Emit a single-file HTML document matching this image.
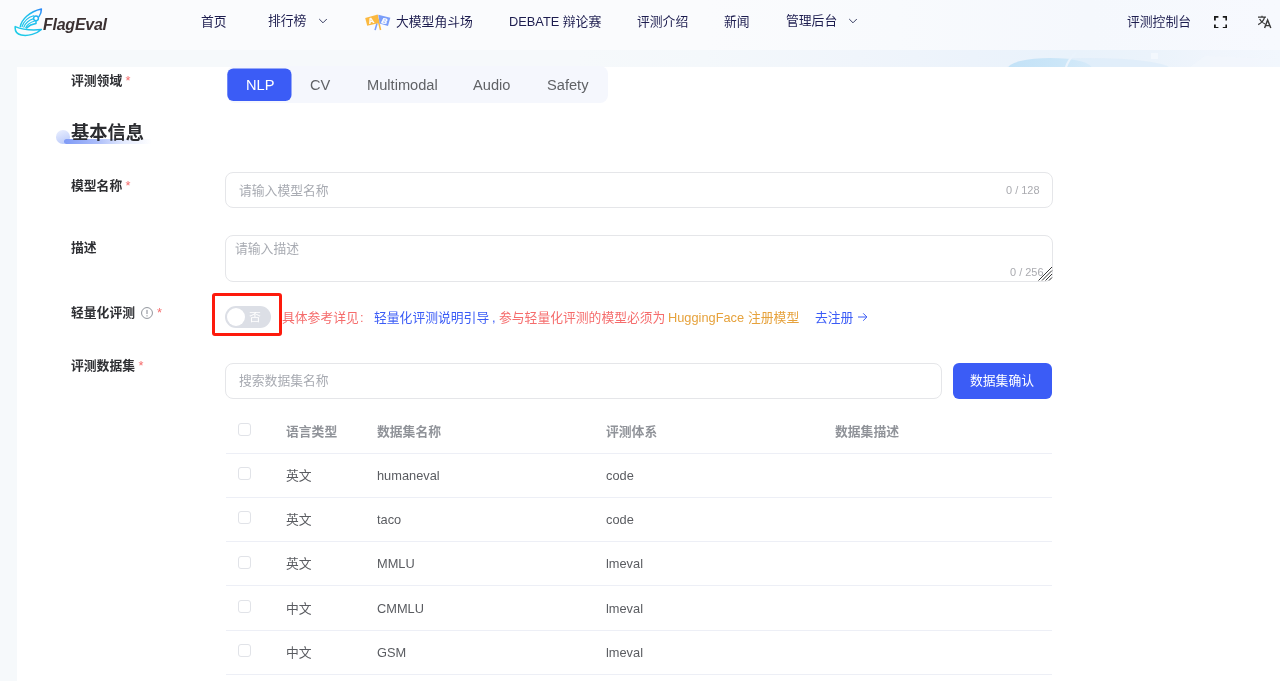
<!DOCTYPE html>
<html lang="zh-CN">
<head>
<meta charset="utf-8">
<title>FlagEval</title>
<style>
*{box-sizing:border-box;margin:0;padding:0}
html,body{width:1280px;height:681px;overflow:hidden}
body{font-family:"Liberation Sans","Noto Sans CJK SC",sans-serif;font-size:12.8px;color:#1d2129;background:#f6f9fb;position:relative}
.abs{position:absolute;white-space:nowrap}
.nav,.label,.segitem,.ph,.cnt,.th,.td,.msg,.t{will-change:transform}
#bgband{left:0;top:50px;width:1280px;height:17px;background:linear-gradient(90deg,#f6f9fb 0%,#f6f9fb 45%,#f4f8fb 55%,#f0f5fb 67%,#ecf3fb 76%,#e9f2fb 84%,#ebf3fb 90%,#f0f5fc 95%,#f2f7fd 100%)}
#header{left:0;top:0;width:1280px;height:50px;background:linear-gradient(90deg,#fafbfd 0%,#fafbfd 55%,#f8fafd 70%,#f5f8fd 85%,#f7f9fe 100%)}
.nav{top:0;height:44px;line-height:44px;font-size:12.8px;color:#1d1d4f}
#card{left:16.7px;top:66.6px;width:1264px;height:615px;background:#fff}
.label{font-weight:bold;font-size:12.8px;color:#2e2f33;line-height:18px}
.req{color:#f56c6c;font-weight:normal;margin-left:3.4px}
.seg{left:227px;top:66px;width:381px;height:37px;background:#f5f7fd;border-radius:8px}
.segitem{top:67px;height:37px;line-height:37px;font-size:14.63px;color:#606266}
.input{border:1px solid #e5e6e9;border-radius:8px;background:#fff}
.ph{color:#a8abb2;font-size:12.8px}
.cnt{color:#aaabb0;font-size:10.97px}
.th{font-weight:bold;color:#909399;font-size:12.8px;line-height:18px}
.td{color:#5a5c61;font-size:12.8px;line-height:18px}
.cb{width:12.6px;height:12.6px;border:1px solid #e1e3e8;border-radius:3px;background:#fff;left:238px}
.msg{top:309px;line-height:18px;font-size:12.8px}
.hr{left:226px;width:826px;height:1px;background:#edeff6}
</style>
</head>
<body>
<div id="bgband" class="abs"></div>
<svg class="abs" style="left:860px;top:50px" width="420" height="17" viewBox="0 0 420 17">
  <defs><linearGradient id="el" x1="0" y1="0" x2="1" y2="0"><stop offset="0" stop-color="#c3e2f7"/><stop offset="0.6" stop-color="#cbe6f8"/><stop offset="1" stop-color="#d6eaf9"/></linearGradient></defs>
  <ellipse cx="228" cy="19" rx="82" ry="11" fill="#dcebf9" opacity="0.65"/>
  <ellipse cx="190" cy="18.5" rx="42" ry="10.5" fill="url(#el)"/>
  <path d="M206 17 C208 11 211 7 216 3" stroke="#eaf3fc" stroke-width="2.2" fill="none"/>
  <rect x="291" y="3" width="7" height="6" fill="#f4f8fd" opacity="0.9"/>
  <path d="M330 17 L345 6 L420 9 L420 17 Z" fill="#f2f7fc" opacity="0.7"/>
</svg>
<div id="card" class="abs"></div>
<div id="header" class="abs"></div>

<!-- logo -->
<svg class="abs" style="left:14px;top:7px" width="32" height="30" viewBox="0 0 32 30">
  <defs><linearGradient id="lg" gradientUnits="userSpaceOnUse" x1="2" y1="28" x2="28" y2="4"><stop offset="0" stop-color="#1ccde6"/><stop offset="0.7" stop-color="#20bdee"/><stop offset="1" stop-color="#2a8af8"/></linearGradient></defs>
  <g fill="none" stroke="url(#lg)" stroke-width="1.5" stroke-linecap="round" stroke-linejoin="round">
    <path d="M6.3 19.6 C7.5 13 15 4.5 27.4 2 C27.4 5 26.4 7.8 25 9.6"/>
    <path d="M8 19.8 C10 14 14 10.3 19.6 8.8" stroke-width="1.1"/>
    <path d="M9.8 20.2 C11.5 15.8 15 13 19.6 11.6" stroke-width="1.1"/>
    <path d="M11.8 20.6 C13.5 17.2 16.5 15.2 20.6 14" stroke-width="1.1"/>
    <path d="M22 13.8 L22 16.6 C18 17.2 15 18.6 12.6 21"/>
    <circle cx="22" cy="11.3" r="2.4" fill="#fff"/>
    <path d="M1.2 19.6 C6 21.6 16 23.6 27.4 22.5 C23 26.6 14 29.6 7.2 28 C2.6 27 0.8 23.5 1.2 19.6 Z"/>
  </g>
</svg>
<div class="abs t" style="left:43px;top:14px;font-size:16px;line-height:22px;font-weight:bold;font-style:italic;color:#3b3132;letter-spacing:-0.25px">FlagEval</div>

<!-- nav -->
<div class="abs nav" style="left:201px">首页</div>
<div class="abs nav" style="left:268px;top:-1px">排行榜</div>
<svg class="abs" style="left:317.5px;top:17px" width="10" height="8" viewBox="0 0 10 8"><path d="M1.2 2 L5 5.8 L8.8 2" fill="none" stroke="#3a3f63" stroke-width="1"/></svg>
<svg class="abs t" style="left:365px;top:13px" width="27" height="19" viewBox="0 0 27 19">
  <path d="M11.3 10 L12.8 10.4 L10.8 17.3 L9.3 16.9 Z" fill="#7b9ef9"/>
  <path d="M0.2 5 L12 1.8 L14.2 10 L2.2 12.8 Z" fill="#fbb940"/>
  <path d="M11.2 2 L12.7 1.6 L16.3 16.8 L14.8 17.2 Z" fill="#fbb940"/>
  <path d="M13.3 1.8 L25.3 4.8 L23 12.9 L14.6 10.4 Z" fill="#7b9ef9"/>
  <text transform="translate(4 10.9) rotate(-14)" font-size="7.9" font-weight="bold" fill="#fff" stroke="#fff" stroke-width="0.25" font-family="Liberation Sans, sans-serif">A</text>
  <text transform="translate(15.9 9.9) rotate(14)" font-size="7.9" font-weight="bold" font-style="italic" fill="#fff" stroke="#fff" stroke-width="0.25" font-family="Liberation Sans, sans-serif">B</text>
</svg>
<div class="abs nav" style="left:396px">大模型角斗场</div>
<div class="abs nav" style="left:509px">DEBATE 辩论赛</div>
<div class="abs nav" style="left:637px">评测介绍</div>
<div class="abs nav" style="left:724px">新闻</div>
<div class="abs nav" style="left:786px;top:-1px">管理后台</div>
<svg class="abs" style="left:847.8px;top:17.3px" width="10" height="8" viewBox="0 0 10 8"><path d="M1.2 2 L5 5.8 L8.8 2" fill="none" stroke="#3a3f63" stroke-width="1"/></svg>
<div class="abs nav" style="left:1127px">评测控制台</div>
<svg class="abs" style="left:1214.2px;top:15.6px" width="13.2" height="12.8" viewBox="0 0 13.2 12.8"><path d="M0.9 4.4 V0.9 H4.4 M8.8 0.9 H12.3 V4.4 M12.3 8.4 V11.9 H8.8 M4.4 11.9 H0.9 V8.4" fill="none" stroke="#1a1a1a" stroke-width="1.8"/></svg>
<svg class="abs" style="left:1257px;top:15px" width="15" height="14" viewBox="0 0 15 14">
  <g fill="none" stroke="#3a3a3a" stroke-width="1.25">
    <path d="M1 2.2 H9 M5 0.8 V2.2 M7.6 2.2 C6.8 5.5 4.5 8 1.2 9.6 M2.6 4 C3.6 6.2 5.6 8 8 9"/>
    <path d="M7.6 13 L10.6 5 L13.8 13 M8.7 10.6 H12.7" stroke-width="1.45"/>
  </g>
</svg>

<!-- 评测领域 -->
<div class="abs label" style="left:71px;top:72px">评测领域<span class="req">*</span></div>
<div class="abs seg"></div>
<svg class="abs" style="left:226px;top:67px" width="68" height="36" viewBox="0 0 68 36"><rect x="1.3" y="1.4" width="64.2" height="32.6" rx="6" fill="#3b5cf6"/></svg>
<div class="abs segitem" style="left:245.5px;color:#fff">NLP</div>
<div class="abs segitem" style="left:310px">CV</div>
<div class="abs segitem" style="left:367px">Multimodal</div>
<div class="abs segitem" style="left:473px">Audio</div>
<div class="abs segitem" style="left:546.6px">Safety</div>

<!-- 基本信息 -->
<div class="abs" style="left:56px;top:130px;width:14px;height:13.5px;border-radius:50%;background:linear-gradient(160deg,#e6ecfe 10%,#bccbfa 90%)"></div>
<div class="abs" style="left:64px;top:139px;width:88px;height:5px;border-radius:3px;background:linear-gradient(90deg,#7f9af6 0%,#a9bbf9 36%,rgba(200,213,252,0.5) 68%,rgba(255,255,255,0) 100%)"></div>
<div class="abs t" style="left:71px;top:120px;font-size:18.29px;line-height:26px;font-weight:bold;color:#2b2c30">基本信息</div>

<!-- 模型名称 -->
<div class="abs label" style="left:71px;top:177px">模型名称<span class="req">*</span></div>
<div class="abs input" style="left:225.4px;top:172.2px;width:827.2px;height:36px"></div>
<div class="abs ph" style="left:238.8px;top:182px;line-height:18px">请输入模型名称</div>
<div class="abs cnt" style="left:1006px;top:183px;line-height:14px">0 / 128</div>

<!-- 描述 -->
<div class="abs label" style="left:71px;top:239px">描述</div>
<div class="abs input" style="left:225.4px;top:235px;width:827.2px;height:47px"></div>
<div class="abs ph" style="left:235.2px;top:240px;line-height:18px">请输入描述</div>
<div class="abs cnt" style="left:1010px;top:265px;line-height:14px">0 / 256</div>
<svg class="abs" style="left:1037.5px;top:266px" width="15" height="15" viewBox="0 0 15 15"><path d="M0.5 14.5 L14 1 M4 14.5 L14 4.5 M7.5 14.5 L14 8 M11 14.5 L14 11.5" stroke="#2a2a2a" stroke-width="0.95" fill="none"/></svg>

<!-- 轻量化评测 -->
<div class="abs label" style="left:71px;top:304px">轻量化评测</div>
<svg class="abs" style="left:139.6px;top:306.4px" width="14" height="14" viewBox="0 0 14 14"><circle cx="7" cy="7" r="5.45" fill="none" stroke="#7d828a" stroke-width="0.85"/><path d="M7 3.9 V8 M7 9.3 V10.4" stroke="#7d828a" stroke-width="0.95" fill="none"/></svg>
<div class="abs t" style="left:157px;top:304px;color:#f56c6c;line-height:18px">*</div>
<div class="abs" style="left:212.1px;top:293px;width:70px;height:43.4px;border:3px solid #fd1a0c;border-radius:3px"></div>
<div class="abs" style="left:225.2px;top:305.6px;width:46px;height:22px;border-radius:11px;background:#dcdfe6"></div>
<div class="abs" style="left:226.5px;top:307.5px;width:18.4px;height:18.4px;border-radius:50%;background:#fff"></div>
<div class="abs t" style="left:249px;top:309px;font-size:11.9px;line-height:16px;color:#fff">否</div>
<div class="abs msg" style="left:281.8px;color:#f56c6c">具体参考详见</div>
<div class="abs msg" style="left:359.5px;color:#f56c6c">:</div>
<div class="abs msg" style="left:374px;color:#3b5cf6">轻量化评测说明引导</div>
<div class="abs msg" style="left:491.7px;color:#3b5cf6">,</div>
<div class="abs msg" style="left:499px;color:#f56c6c">参与轻量化评测的模型必须为</div>
<div class="abs msg" style="left:668px;color:#e6a23c">HuggingFace</div>
<div class="abs msg" style="left:747.5px;color:#e6a23c">注册模型</div>
<div class="abs msg" style="left:814.5px;color:#3b5cf6">去注册</div>
<svg class="abs" style="left:857.4px;top:312.2px" width="12" height="10" viewBox="0 0 12 10"><path d="M1 5 H9.9 M6.2 1.3 L9.9 5 L6.2 8.7" fill="none" stroke="#3b5cf6" stroke-width="1"/></svg>

<!-- 评测数据集 -->
<div class="abs label" style="left:71px;top:357px">评测数据集<span class="req">*</span></div>
<div class="abs input" style="left:225.4px;top:362.6px;width:716.4px;height:36px"></div>
<div class="abs ph" style="left:239px;top:372px;line-height:18px">搜索数据集名称</div>
<div class="abs" style="left:952.5px;top:362.5px;width:99.7px;height:36px;background:#3b5cf6;border-radius:6px"></div>
<div class="abs t" style="left:952px;top:362px;width:100px;height:37px;color:#fff;font-size:12.8px;line-height:37px;text-align:center">数据集确认</div>

<!-- table -->
<div class="abs cb" style="top:423.4px"></div>
<div class="abs th" style="left:286px;top:423px">语言类型</div>
<div class="abs th" style="left:377px;top:423px">数据集名称</div>
<div class="abs th" style="left:606px;top:423px">评测体系</div>
<div class="abs th" style="left:835px;top:423px">数据集描述</div>
<div class="abs hr" style="top:453px"></div>

<div class="abs cb" style="top:467px"></div>
<div class="abs td" style="left:286px;top:467px">英文</div>
<div class="abs td" style="left:377px;top:467px">humaneval</div>
<div class="abs td" style="left:606px;top:467px">code</div>
<div class="abs hr" style="top:497px"></div>

<div class="abs cb" style="top:511px"></div>
<div class="abs td" style="left:286px;top:511px">英文</div>
<div class="abs td" style="left:377px;top:511px">taco</div>
<div class="abs td" style="left:606px;top:511px">code</div>
<div class="abs hr" style="top:541px"></div>

<div class="abs cb" style="top:556px"></div>
<div class="abs td" style="left:286px;top:555px">英文</div>
<div class="abs td" style="left:377px;top:555px">MMLU</div>
<div class="abs td" style="left:606px;top:555px">lmeval</div>
<div class="abs hr" style="top:585px"></div>

<div class="abs cb" style="top:600px"></div>
<div class="abs td" style="left:286px;top:600px">中文</div>
<div class="abs td" style="left:377px;top:600px">CMMLU</div>
<div class="abs td" style="left:606px;top:600px">lmeval</div>
<div class="abs hr" style="top:630px"></div>

<div class="abs cb" style="top:644px"></div>
<div class="abs td" style="left:286px;top:644px">中文</div>
<div class="abs td" style="left:377px;top:644px">GSM</div>
<div class="abs td" style="left:606px;top:644px">lmeval</div>
<div class="abs hr" style="top:674px"></div>
</body>
</html>
